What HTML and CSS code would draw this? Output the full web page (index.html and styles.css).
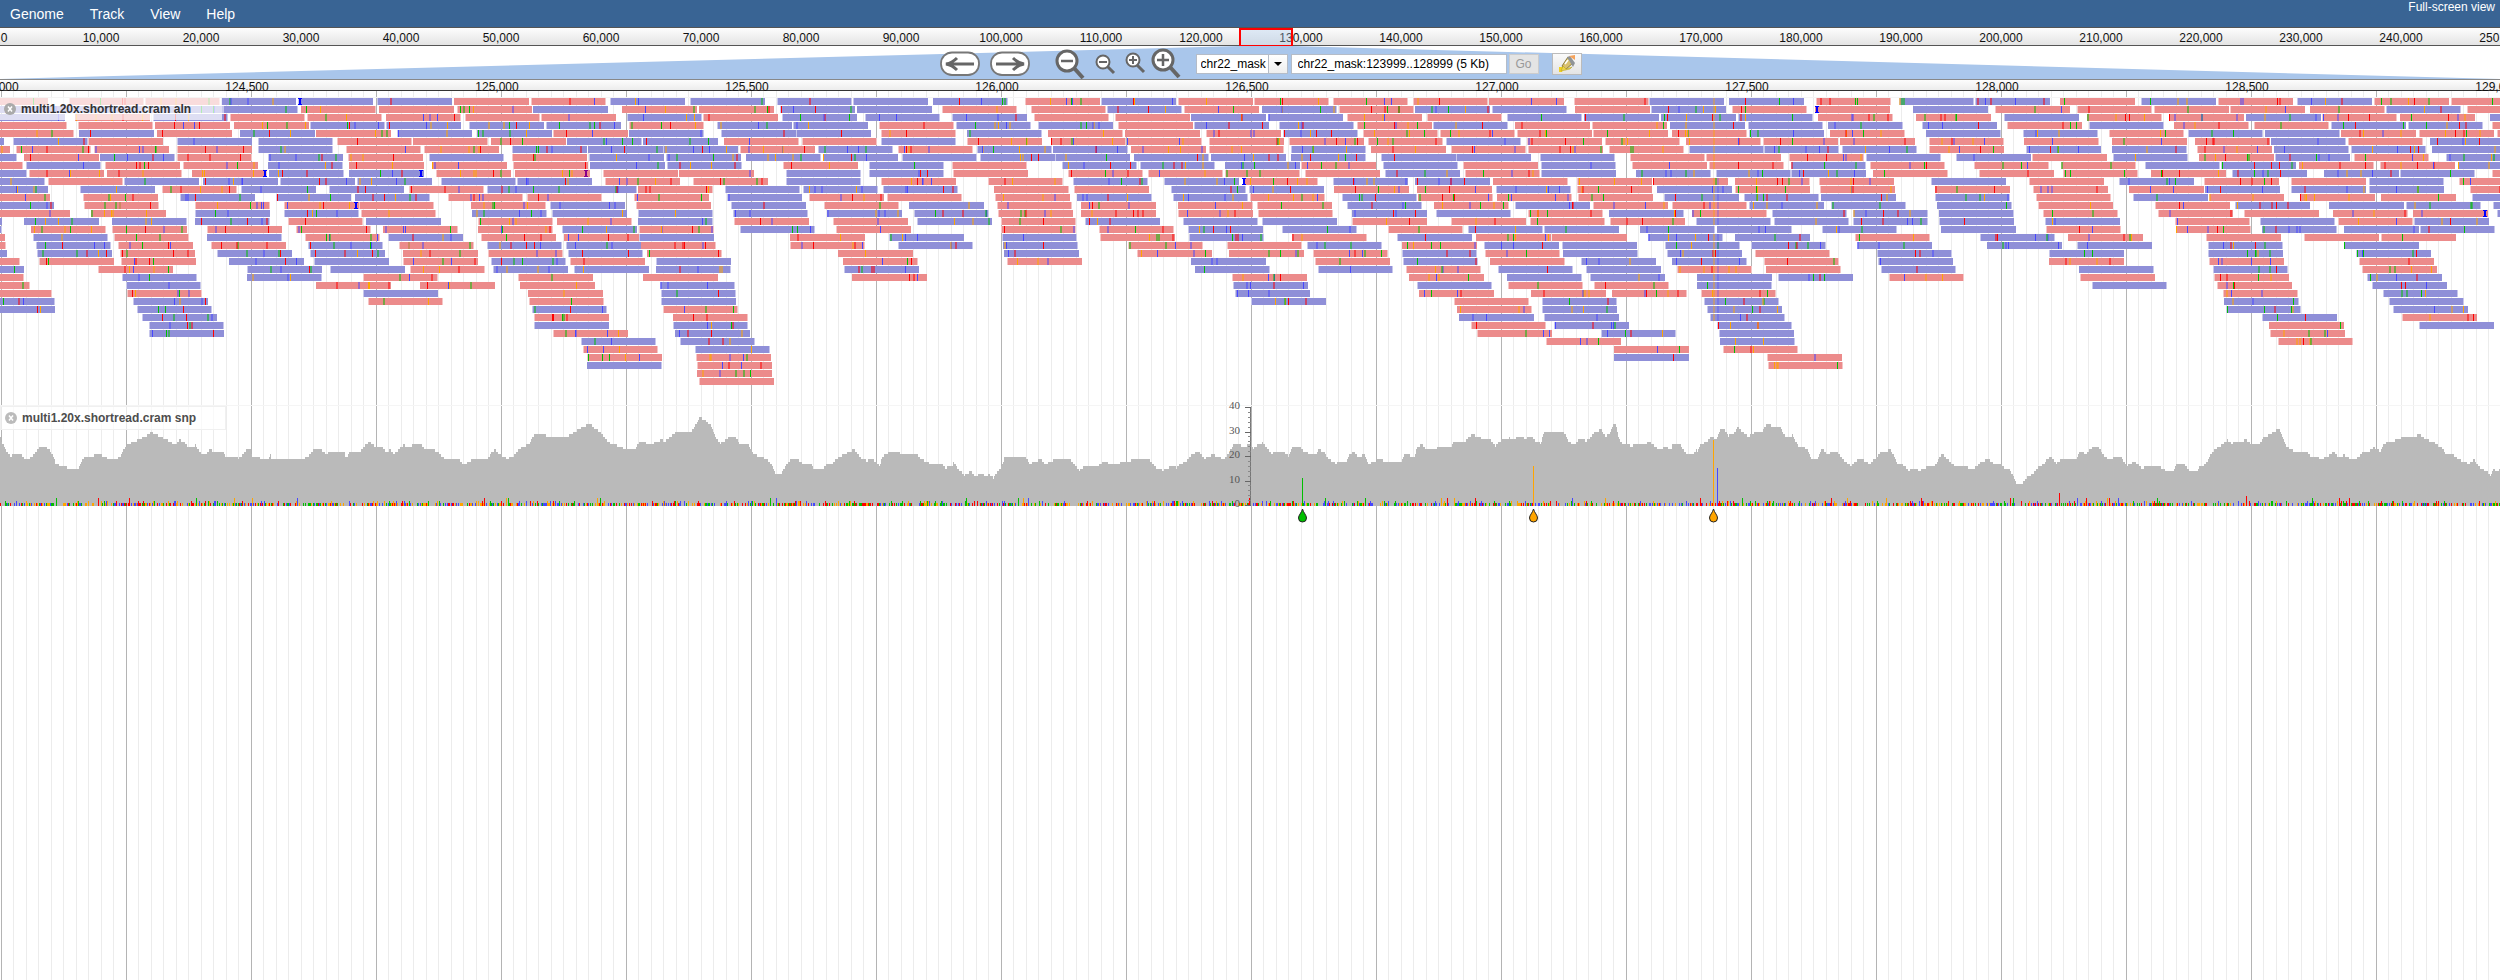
FILE: index.html
```html
<!DOCTYPE html>
<html lang="en">
<head>
<meta charset="utf-8">
<title>chr22_mask:123999..128999</title>
<link rel="stylesheet" href="styles.css">
</head>
<body>
<header class="menubar">
  <nav class="menus">
    <button class="menu" type="button">Genome</button>
    <button class="menu" type="button">Track</button>
    <button class="menu" type="button">View</button>
    <button class="menu" type="button">Help</button>
  </nav>
  <a class="fullscreen" href="#">Full-screen view</a>
</header>

<div class="overview">
  <ol class="scale scale-overview" id="overview-scale"></ol>
  <div class="region"></div>
</div>

<div class="navbar">
  <svg class="beam" viewBox="0 0 2500 34" preserveAspectRatio="none" aria-hidden="true">
    <path d="M0 34 L1239 0 H1292 L2500 34Z" fill="#a9c6eb"/>
  </svg>
  <div class="controls">
    <button class="icon pan" type="button" aria-label="Pan left">
      <svg width="40" height="26" viewBox="0 0 40 26"><rect x="1" y="1.5" width="38" height="22.500" rx="11" fill="#fff" stroke="#777" stroke-width="1.800"/><path d="M34 13H8M17 7Q12 12 6 13Q12 14 17 19" fill="none" stroke="#666" stroke-width="3"/></svg>
    </button>
    <button class="icon pan" type="button" aria-label="Pan right">
      <svg width="40" height="26" viewBox="0 0 40 26"><rect x="1" y="1.500" width="38" height="22.500" rx="11" fill="#fff" stroke="#777" stroke-width="1.800"/><path d="M6 13H32M23 7Q28 12 34 13Q28 14 23 19" fill="none" stroke="#666" stroke-width="3"/></svg>
    </button>
    <button class="icon zoom-first" type="button" aria-label="Zoom out a lot">
      <svg width="32" height="32" viewBox="0 0 32 32"><path d="M19 20L28 30" stroke="#666" stroke-width="4"/><circle cx="12" cy="13" r="10" fill="#fff" stroke="#666" stroke-width="3"/><path d="M6 13H18" stroke="#666" stroke-width="2.500"/></svg>
    </button>
    <button class="icon" type="button" aria-label="Zoom out">
      <svg width="22" height="24" viewBox="0 0 22 24"><path d="M12 14L19 21" stroke="#666" stroke-width="3"/><circle cx="8" cy="10" r="6.500" fill="#fff" stroke="#666" stroke-width="2"/><path d="M4 10H12" stroke="#666" stroke-width="2"/></svg>
    </button>
    <button class="icon zoom-in" type="button" aria-label="Zoom in">
      <svg width="22" height="24" viewBox="0 0 22 24"><path d="M12 13L19 20" stroke="#666" stroke-width="3"/><circle cx="8" cy="8" r="6.500" fill="#fff" stroke="#666" stroke-width="2"/><path d="M4 8H12M8 4V12" stroke="#666" stroke-width="2"/></svg>
    </button>
    <button class="icon zoom-last" type="button" aria-label="Zoom in a lot">
      <svg width="32" height="32" viewBox="0 0 32 32"><path d="M19 19L28 29" stroke="#666" stroke-width="4"/><circle cx="12" cy="12" r="10" fill="#fff" stroke="#666" stroke-width="3"/><path d="M6 12H18M12 6V18" stroke="#666" stroke-width="2.500"/></svg>
    </button>
    <label class="refseq">
      <select class="refseq-select" aria-label="Reference sequence"><option>chr22_mask</option></select>
      <span class="refseq-arrow"></span>
    </label>
    <input class="location" type="text" aria-label="Location" value="chr22_mask:123999..128999 (5 Kb)">
    <button class="go" type="button" disabled>Go</button>
    <button class="highlight" type="button" aria-label="Highlight a region">
      <svg width="18" height="18" viewBox="0 0 18 18"><path d="M1 12H6L4 17H1Z" fill="#f0d020"/><path d="M4 11L10 2L15 8L7 15Z" fill="#d8c070" stroke="#8a7a3a"/><path d="M9 2L12 1L17 8L15 12Z" fill="#8f9498"/><path d="M11 1L17 0L17 5Z" fill="#f5a25a"/><path d="M3 16L5 11L8 14L14 12L12 14Z" fill="#ecd64a" stroke="#b09a20" stroke-width=".5"/><path d="M7 9L10 5" stroke="#fff" stroke-width="1.500"/></svg>
    </button>
  </div>
</div>

<div class="ruler">
  <ol class="scale scale-detail" id="detail-scale"></ol>
</div>

<main class="tracks">
  <svg class="grid" id="grid" preserveAspectRatio="none" viewBox="0 0 2500 900" aria-hidden="true"></svg>
  <section class="track">
    <svg class="plot plot-reads" id="reads" preserveAspectRatio="none" viewBox="0 0 2500 307" role="img" aria-label="Aligned reads"></svg>
    <div class="label">
      <button class="close" type="button" aria-label="Close track"><svg width="12" height="12" viewBox="0 0 12 12"><circle cx="6" cy="6" r="6" fill="#aaa"/><path d="M4 3.500L8 8.500M8 3.500L4 8.500" stroke="#fff" stroke-width="1.500"/></svg></button>
      <span>multi1.20x.shortread.cram aln</span>
    </div>
  </section>
  <section class="track">
    <svg class="plot plot-snp" id="snp" preserveAspectRatio="none" viewBox="0 0 2500 119" role="img" aria-label="Coverage and SNPs"></svg>
    <svg class="axis" id="axis" width="32" height="120" viewBox="0 0 32 120"></svg>
    <div class="label label-wide">
      <button class="close" type="button" aria-label="Close track"><svg width="12" height="12" viewBox="0 0 12 12"><circle cx="6" cy="6" r="6" fill="#bbb"/><path d="M4 3.500L8 8.500M8 3.500L4 8.500" stroke="#fff" stroke-width="1.500"/></svg></button>
      <span>multi1.20x.shortread.cram snp</span>
    </div>
  </section>
</main>
<script src="browser.js"></script>
</body>
</html>
```
FILE: styles.css
```css
* { box-sizing: border-box; }
body {
  margin: 0;
  min-height: 100vh;
  display: flex;
  flex-direction: column;
  background: #fff;
  color: #111;
  font: 12px/14px "Liberation Sans", Arial, sans-serif;
  overflow-x: hidden;
}
button, select, input { font: inherit; margin: 0; }
button { cursor: pointer; }

.menubar {
  display: flex;
  justify-content: space-between;
  height: 27px;
  background: #396494;
}
.menus { display: flex; gap: 26px; padding: 0 10px; }
.menu {
  border: 0;
  padding: 0;
  background: none;
  color: #fff;
  font-size: 14px;
}
.fullscreen { color: #fff; text-decoration: none; padding: 0 5px; }

.overview {
  position: relative;
  height: 19px;
  border-top: 1px solid #555;
  border-bottom: 1px solid #555;
  background: linear-gradient(#fdfdfd, #e4e4e4);
}
.scale {
  display: flex;
  margin: 0;
  padding: 0;
  list-style: none;
  text-align: center;
  white-space: nowrap;
}
.scale li { flex: none; }
.scale-overview { margin-left: calc(-2vw + 1px); padding-top: 3px; }
.scale-overview li { width: 4vw; }
.scale-overview li:first-child { padding-left: 6px; }
.region {
  position: absolute;
  top: 0;
  left: 49.54%;
  width: 2.16%;
  height: 19px;
  border: 2px solid #f00;
  background: rgba(170, 200, 235, .35);
}

.navbar { position: relative; height: 33px; }
.beam { position: absolute; inset: 0; width: 100%; height: 100%; }
.controls {
  position: relative;
  display: flex;
  justify-content: center;
  align-items: center;
  height: 35px;
  padding-left: 21px;
}
.icon { display: block; border: 0; padding: 0; background: none; height: 32px; }
.icon svg { display: block; }
.pan { margin-right: 10px; height: 26px; }
.zoom-first { margin-left: 15px; margin-right: 8px; }
.zoom-in { margin: 0 4px 0 8px; }
.icon:nth-child(4), .zoom-in { height: 24px; }
.zoom-last { margin-right: 13px; }
.refseq {
  display: flex;
  width: 92px;
  height: 20px;
  margin-right: 3px;
  border: 1px solid #b5bcc7;
  background: #fff;
}
.refseq-select {
  appearance: none;
  width: 71px;
  border: 0;
  padding: 0 0 0 4px;
  background: #fff;
  color: #000;
}
.refseq-arrow {
  flex: 1;
  border-left: 1px solid #b5bcc7;
  background: linear-gradient(#fff, #eee);
  display: grid;
  place-items: center;
}
.refseq-arrow::after {
  content: "";
  border: 4px solid transparent;
  border-top-color: #000;
  border-bottom: 0;
}
.location {
  width: 216px;
  height: 20px;
  margin-right: 2px;
  border: 1px solid #b5bcc7;
  padding: 0 6px;
  background: #fff;
  color: #000;
}
.go {
  width: 30px;
  height: 20px;
  margin-right: 13px;
  border: 1px solid #ccc;
  padding: 0;
  background: #e4e4e4;
  color: #999;
}
.highlight {
  display: grid;
  place-items: center;
  width: 30px;
  height: 22px;
  border: 1px solid #bbb;
  padding: 0;
  background: linear-gradient(#fafafa, #e4e4e4);
}

.ruler {
  position: relative;
  z-index: 1;
  height: 12px;
  border-top: 1px solid #888;
  border-bottom: 1px solid #333;
  background: linear-gradient(#fdfdfd, #ececec);
}
.scale-detail { margin-left: calc(-5vw - 3px); }
.scale-detail li { width: 10vw; }

.tracks { position: relative; flex: 1; padding-top: 6px; }
.grid { position: absolute; inset: 0; width: 100%; height: 100%; }
.track { position: relative; border-top: 1px solid #f5f5f5; }
.plot { display: block; width: 100%; }
.plot-reads { height: 307px; }
.plot-snp { height: 119px; }
.axis {
  position: absolute;
  top: 0;
  left: calc(50% - 22px);
  overflow: visible;
  font: 11px "Liberation Serif", serif;
}
.label {
  position: absolute;
  top: 0;
  left: 0;
  display: flex;
  align-items: center;
  gap: 5px;
  width: 222px;
  height: 22px;
  padding-left: 4px;
  background: rgba(255, 255, 255, .7);
  color: #333;
  font-weight: bold;
}
.label-wide {
  width: 226px;
  height: 24px;
  border: 1px solid #f0f0f0;
  color: #4d4d4d;
}
.close { display: flex; border: 0; padding: 0; background: none; }
```
FILE: browser.js
```javascript
// Reads are listed by pile-up row. Each tile has its own origin and
// units per screen unit; r = forward strand, b = reverse strand.
const tiles = [
  { origin: 0, unit: 1.96, rows: `
r-52 r135 r284 b434 b585 b738 r890 r1040 b1195 b1352 b1522
b-10 b140 b290 b437 r590 r743 r896 b1045 r1220 r1370 b1528
b-19 r147 b300 r451 r601 r757 r911 r1061 b1228 r1378 b1533
r-16 r153 r303 r458 b608 b757 b920 b1071 r1232 b1406 b1555
r-2 b155 r308 b471 r619 b778 b935 r1083 b1233 b1413 b1561
b-139 b25 r172 b346 b505 r660 r810 r963 b1111 b1260 r1420
r-127 r31 r185 r347 b506 r678 r831 b1003 b1152 b1299 r1450
b-114 r48 b196 r346 b526 r682 b841 r1004 b1154 b1305 b1463
r-101 b50 r206 r359 b526 r684 r846 r1006 b1156 b1307 r1535
b-94 r56 r209 r376 b527 b684 r855 r1009 r1181 r1331 b1541
b-58 r95 b243 b398 b549 b699 b864 b1014 r1185 r1358 b1541
b-52 b157 r317 b473 b645 r801 b955 b1102 r1250 b1421
r-49 r163 b352 b541 b695 r879 r1033 r1242 b1425
b-42 r165 r382 r556 r704 r923 b1078 r1246 b1433
r-10 r179 b382 b556 r708 b926 b1082 b1250 b1437
b-143 b48 b219 b382 r564 b718 r936 r1092 b1250 r1439
b-143 r61 r220 r406 r580 r750 r937 b1101 r1252 b1451
r-137 b65 r223 b406 r597 b760 r942 r1105 b1253 r1548
r-135 b71 r231 r413 b604 r783 b955 b1109 r1257 r1549
b-133 b73 r235 b425 b608 r789 r956 b1114 r1268
r-107 r77 r237 b448 b615 r789 b963 r1118 b1285
b-100 r193 b484 b647 r804 b967 b1125 b1286
r-99 b240 b485 r712 r1016 r1261
r-88 b247 r620 r824 r1019 b1293
r-45 r248 b712 r1035 b1295
b-39 b260 r721 r1036 b1295
b-39 b269 b1042 r1299
b278 r1046 r1319
b292 b1047 b1320
b292 r1084 b1323
b1138 b1333
r1142 b1362
r1150 r1365
b1150 r1367
r1367
r1371` },
  { origin: 800, unit: 1.845, rows: `
b97 b245 r416 b556 r697 r837 r984 r1131 r1272 r1428
b105 r262 r426 b567 r709 b852 r994 b1134 b1277 r1429
b120 b280 r432 r582 b722 b863 r1009 r1156 b1304 b1446
r146 b288 b440 r587 b727 b883 r1028 b1167 r1319 r1461
r149 b308 r457 r599 r749 b891 r1038 r1181 r1322 r1463
r4 b149 r309 r463 r603 r754 r902 r1048 b1192 r1341 r1485
b33 r180 b327 b467 r610 r755 b905 r1053 r1201 r1343 r1492
b43 b189 b332 b471 b616 b758 b905 b1072 b1211 b1365 r1531
b127 r280 b483 b627 b784 r924 b1076 r1223 b1367 r1535
b127 r282 r494 r642 r785 r932 b1080 r1227 b1367 b1542
r150 r346 b503 b671 r818 b984 b1134 r1278 r1433
b6 b154 r358 r505 b685 b829 r985 r1138 b1284 r1434
r16 r161 r360 b511 b688 r830 b1000 r1141 r1286 r1435
r45 b201 r363 r518 r697 r843 b1010 r1170 b1319 r1464
b50 b211 r365 r518 r697 r845 b1018 b1173 r1343 b1492
r61 b215 r370 b526 b707 b853 r1018 r1201 r1347 r1494
r67 r371 r551 b716 b889 r1084 b1233 b1372 b1550
b164 b372 r554 b717 r908 b1102 r1248 r1388 b1564
b181 b374 r605 r788 b935 r1110 b1262 b1405
r71 b376 r621 r792 r947 b1110 r1264 b1408
r80 r382 b722 r951 b1113 r1273 b1441
b82 b729 b956 r1118 b1288 b1450
r96 r797 r1123 b1304 b1457
b798 b1138 r1306 r1465
b802 r1142 r1349 r1499
b832 r1206 b1369
r1212 b1369
b1215 b1373
r1238 b1391
r1249 b1477
r1377
r1501
b1502` },
  { origin: 1650, unit: 1.845, rows: `
b-1 b146 r306 b460 b600 r756 b906 r1048 b1194 r1335 r1478
b2 r151 r304 b486 r636 r788 r930 r1071 r1217 b1357 r1508
b21 b162 r310 r490 b653 r806 r957 b1100 r1239 r1384 b1550
b36 b181 b328 b502 r658 b810 r967 r1114 b1257 b1399 r1554
r41 b183 r333 b509 b689 r847 b992 b1134 r1274 r1418 r1562
r66 r208 r350 r514 r690 r852 r1005 b1146 r1288 b1440
b72 b211 b354 r515 b694 b853 r1009 b1151 b1293 b1443
r104 r257 b399 b564 r705 b854 r1013 b1154 r1299 b1468
r109 b260 r406 r598 r758 b914 b1054 r1197 r1347 b1491
b122 b261 r411 r607 r762 r925 b1074 b1244 b1384 r1554
r5 r156 r311 b519 r700 b866 r1022 r1183 b1326 r1492
b12 r157 r314 r525 r707 r883 b1024 b1183 b1326 r1513
b26 b173 b316 b526 r713 b891 r1031 r1199 r1348 b1516
r41 b183 b334 b530 r715 r932 b1079 b1252 b1394 b1555
r78 b225 b374 b533 r725 r937 r1096 r1261 r1408 b1562
b85 b228 b375 b533 b729 r968 b1125 r1269 b1409
b124 b317 b536 r731 r970 b1129 b1280 b1420
b157 r379 b609 r771 r1025 r1207 r1348
b28 b187 b382 b621 b787 b1029 b1281
b31 r193 b419 b736 b1030 b1302
b41 r210 b421 r737 r1031 r1309
r50 r214 b427 b791 b1039 r1314
b87 b237 r441 r793 r1040 b1323
b87 b816 r1046 b1332
r95 r1057 b1352
b100 b1059 b1364
b106 b1063 b1370
b111 b1129 r1388
b124 r1142 b1418
b127 r1144
b130 r1159
r135
r215
r218` }
];

// Insertions: x, row, colour.
const insertions = [
  [300, 0, '#00f'], [265, 9, '#00f'], [421, 9, '#00f'], [586, 9, '#808'],
  [356, 13, '#00f'], [1244, 10, '#00f'], [1817, 1, '#00f'], [2485, 14, '#00f']
];

// Coverage outline per tile: x,depth-offset pairs measured from the track top.
const coverage = [
  { origin: 0, points: `0,128 3,142 8,158 14,175 20,183 26,175 38,177 45,190 55,188 62,175 72,155 85,155 92,168 98,183 102,206 110,212 120,213 125,225 130,219 144,219 150,197 156,183 170,183 182,172 188,183 200,190 216,189 222,180 228,160 236,146 248,139 258,130 270,122 278,112 285,116 300,128 312,138 322,151 330,134 338,140 348,158 360,150 372,180 380,175 385,163 395,168 410,168 415,183 440,188 448,175 456,162 462,162 464,182 480,188 496,188 497,172 500,188 520,195 524,188 550,195 568,183 574,168 582,161 590,161 600,175 612,168 634,168 638,188 646,166 664,166 670,154 680,140 690,152 704,152 712,172 718,162 726,176 736,160 744,148 752,158 762,147 776,145 782,160 798,162 808,172 818,188 846,190 856,210 866,196 890,188 896,196 904,176 912,162 920,175 936,190 946,182 956,162 964,154 976,146 984,120 988,115 1004,118 1014,128 1030,125 1048,122 1060,110 1072,97 1080,92 1088,86 1096,100 1108,112 1120,138 1126,146 1140,152 1158,165 1170,162 1180,140 1196,145 1214,142 1220,128 1224,140 1238,122 1246,110 1256,112 1276,108 1284,85 1290,66 1300,75 1310,90 1318,122 1328,145 1336,138 1342,128 1356,122 1364,150 1380,150 1390,175 1400,183 1414,190 1422,208 1430,238 1440,236 1446,220 1456,195 1470,190 1480,205 1494,205 1502,222 1518,222 1524,206 1536,204 1544,188 1556,176` },
  { origin: 850, points: `0,170 5,160 12,172 20,190 30,196 40,190 48,200 54,212 58,184 70,172 90,172 104,178 125,180 130,190 142,200 150,208 168,205 174,218 188,215 190,200 198,220 210,240 222,228 230,242 244,236 250,243 256,236 264,250 270,230 278,218 284,186 290,180 304,186 324,186 330,205 345,198 350,190 360,206 378,192 404,188 412,204 422,226 432,214 456,213 466,200 486,206 510,198 530,190 550,190 556,202 564,218 576,226 596,212 602,220 608,206 620,198 630,178 642,168 654,190 668,178 690,192 698,172 706,150 718,146 724,156 734,148 740,140 743,160 750,150 760,142 768,155 776,174 798,168 808,182 816,156 828,154 836,168 858,180 864,162 874,170 882,190 896,204 905,196 916,196 918,184 928,170 938,184 948,178 956,205 970,196 980,192 990,202 1016,202 1022,176 1040,184 1046,158 1054,146 1062,162 1080,164 1084,156 1108,156 1114,138 1134,138 1146,118 1160,125 1170,136 1180,132 1190,152 1196,138 1216,128 1220,136 1232,124 1246,130 1256,124 1266,140 1274,144 1280,110 1294,112 1306,108 1318,115 1326,140 1336,150 1344,132 1352,128 1356,138 1364,130 1374,110 1386,104 1392,122 1400,120 1408,90 1412,90 1418,132 1424,144 1440,152 1450,148 1480,146 1490,160 1510,164 1516,148 1530,146 1540,172 1552,182 1562,160` },
  { origin: 1650, points: `0,142 8,152 20,160 30,152 38,166 44,146 56,152 64,170 76,180 86,172 90,152 104,138 114,122 122,136 128,104 134,100 144,122 156,112 160,94 168,108 182,126 188,114 206,112 214,86 220,86 226,98 240,98 250,128 262,120 272,150 290,162 296,190 306,196 312,174 318,158 324,176 344,168 354,190 370,212 384,190 396,196 404,206 416,188 424,170 444,164 456,208 464,206 476,226 490,220 496,228 510,216 524,216 534,182 540,178 552,198 562,212 598,220 610,198 624,192 632,204 646,206 652,218 662,222 672,250 676,265 686,265 692,250 706,236 716,213 726,208 732,190 740,184 748,204 760,190 786,188 792,170 804,175 816,155 828,158 836,180 848,196 856,185 868,184 878,212 894,198 906,220 918,212 938,212 944,220 956,232 966,224 972,205 984,204 994,228 1008,228 1014,214 1024,208 1034,175 1042,160 1054,150 1064,134 1072,144 1100,134 1112,150 1124,144 1132,126 1144,118 1152,108 1160,100 1172,150 1180,160 1190,170 1212,172 1218,182 1240,190 1252,180 1262,168 1268,188 1280,178 1290,190 1304,188 1314,170 1326,168 1334,155 1346,168 1354,145 1368,138 1378,134 1390,124 1404,128 1418,118 1430,132 1446,142 1460,158 1468,176 1480,176 1490,192 1510,205 1520,192 1528,216 1540,226 1550,240 1556,222 1562,234 1568,218` }
];

const bases = ['#f00', '#00bf00', '#4747ff', '#ffa500'];

let seed = 22;
function random() {
  seed = (seed * 1103515245 + 12345) % 2147483648;
  return ((seed >> 8) % 65536) / 65536;
}
function pick(list) {
  return list[Math.floor(random() * list.length)];
}
function rect(x, y, w, h, fill, extra = '') {
  return `<rect x="${x}" y="${y}" width="${w}" height="${h}" fill="${fill}" ${extra}/>`;
}

function drawScales() {
  let html = '';
  for (let i = 0; i <= 25; i++) html += `<li>${(i * 10000).toLocaleString('en-US')}</li>`;
  document.getElementById('overview-scale').innerHTML = html;
  html = '';
  for (let p = 124000; p <= 129000; p += 500) html += `<li>${p.toLocaleString('en-US')}</li>`;
  document.getElementById('detail-scale').innerHTML = html;
}

function drawGrid() {
  let out = '';
  for (let i = 0; i < 200; i++) {
    out += rect(Math.floor(1 + i * 12.5), 0, 1, 900, i % 10 ? '#ececec' : '#b4b4b4');
  }
  document.getElementById('grid').innerHTML = out;
}

function drawReads() {
  let out = '';
  for (const tile of tiles) {
    tile.rows.trim().split('\n').forEach((row, n) => {
      const y = n * 8;
      for (const read of row.split(' ')) {
        const x = Math.round(tile.origin + Number(read.slice(1)) / tile.unit);
        out += rect(x, y, 75, 7, read[0] === 'r' ? '#ec8b8b' : '#8f8fd8');
        if (random() < .7) out += rect(x, y, 1, 7, '#fff', 'opacity=".5"');
        if (random() < .5) out += rect(x + 74, y, 1, 7, '#fff', 'opacity=".5"');
        const count = Math.floor(random() * 6);
        for (let k = 0; k < count; k++) {
          const at = x + Math.floor(random() * 73);
          out += random() < .5
            ? rect(at, y, 1, 7, pick(bases))
            : rect(at, y, 2, 7, pick(bases), 'opacity=".5"');
        }
        if (x <= 1713 && x + 75 > 1718) {
          out += rect(1713, y, 2, 7, '#ffa500', 'opacity=".4"');
          if (n > 9) out += rect(1717, y, 2, 7, '#4747ff', 'opacity=".3"');
        }
      }
    });
  }
  for (const [x, row, fill] of insertions) {
    const y = row * 8;
    out += rect(x - 1, y, 2, 7, fill) + rect(x - 2, y, 4, 1, fill) + rect(x - 2, y + 6, 4, 1, fill);
  }
  document.getElementById('reads').innerHTML = out;
}

function drop(x, fill) {
  return `<path d="M${x} 103C${x + 1} 107 ${x + 4} 109 ${x + 4} 112A4 4 0 0 1 ${x - 4} 112C${x - 4} 109 ${x - 1} 107 ${x} 103Z" fill="${fill}" stroke="#222" shape-rendering="auto"/>`;
}

function drawCoverage() {
  const points = coverage.flatMap(({ origin, points }) =>
    points.split(' ').map(p => {
      const [x, y] = p.split(',').map(Number);
      return [origin + x / 1.845, (332 - y) / 7.4];
    })).sort((a, b) => a[0] - b[0]);
  const base = 100;
  let path = `M0 ${base}`;
  let i = 0;
  for (let x = 0; x < 2500; x++) {
    while (i < points.length - 2 && points[i + 1][0] <= x) i++;
    const [x0, d0] = points[i];
    const [x1, d1] = points[i + 1];
    const t = Math.min(1, (x - x0) / (x1 - x0 || 1));
    const depth = Math.round(d0 + (d1 - d0) * t);
    path += `V${Math.round(base - depth * 2.47)}H${x + 1}`;
  }
  let out = `<path d="${path}V${base}Z" fill="#bababa"/>`;
  for (let x = 0; x < 2500; x++) {
    if (random() < .6) {
      const r = random();
      const height = r < .8 ? 3 : r < .97 ? 5 : 8;
      out += rect(x, base - height, 1, height, pick(bases));
    }
  }
  out += rect(1302, 72, 1, 28, '#00bf00') + rect(1533, 60, 1, 40, '#ffa500');
  out += rect(1713, 34, 1, 66, '#ffa500') + rect(1717, 62, 1, 38, '#4747ff');
  out += rect(2059, 87, 1, 13, '#f00') + rect(2246, 90, 1, 10, '#f00');
  out += drop(1302.5, '#00bf00') + drop(1533.5, '#ffa500') + drop(1713.5, '#ffa500');
  document.getElementById('snp').innerHTML = out;
}

function drawAxis() {
  let out = rect(22, 1, 1, 99, '#777');
  for (let v = 0; v <= 40; v += 2) {
    const y = Math.round(99 - v * 2.45);
    out += v % 10 ? rect(20, y, 3, 1, '#888') : rect(17, y, 6, 1, '#666');
    if (v % 10 === 0) out += `<text x="12" y="${y + 2}" text-anchor="end" fill="#555">${v}</text>`;
  }
  document.getElementById('axis').innerHTML = out;
}

for (const id of ['grid', 'reads', 'snp', 'axis']) {
  document.getElementById(id).setAttribute('shape-rendering', 'crispEdges');
}
drawScales();
drawGrid();
drawReads();
drawCoverage();
drawAxis();
```
